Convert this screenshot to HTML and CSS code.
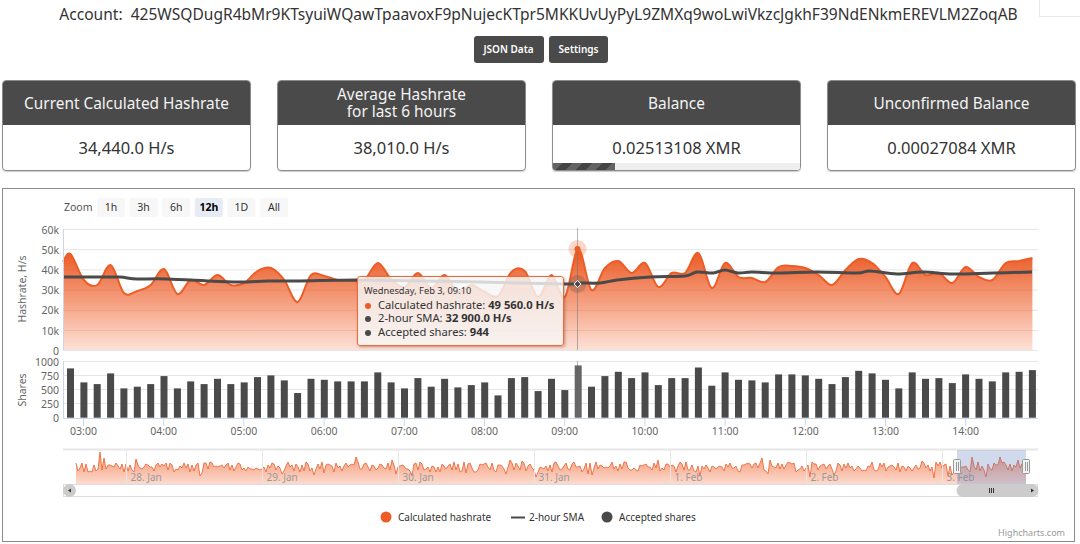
FILE: index.html
```html
<!DOCTYPE html>
<html lang="en">
<head>
    <meta charset="UTF-8">
    <meta name="viewport" content="width=device-width, initial-scale=1.0">
    <title>Miner Stats</title>
    <link rel="stylesheet" href="styles.css">
</head>
<body>
    <div class="corner-tab"></div>

    <p class="account">Account:&nbsp; 425WSQDugR4bMr9KTsyuiWQawTpaavoxF9pNujecKTpr5MKKUvUyPyL9ZMXq9woLwiVkzcJgkhF39NdENkmEREVLM2ZoqAB</p>

    <div class="actions">
        <a class="btn">JSON Data</a>
        <a class="btn">Settings</a>
    </div>

    <div class="cards">
        <div class="card">
            <div class="card-head">Current Calculated Hashrate</div>
            <div class="card-body">34,440.0 H/s</div>
        </div>
        <div class="card">
            <div class="card-head">Average Hashrate<br>for last 6 hours</div>
            <div class="card-body">38,010.0 H/s</div>
        </div>
        <div class="card">
            <div class="card-head">Balance</div>
            <div class="card-body">0.02513108 XMR</div>
            <div class="progress"><div class="progress-bar"></div></div>
        </div>
        <div class="card">
            <div class="card-head">Unconfirmed Balance</div>
            <div class="card-body">0.00027084 XMR</div>
        </div>
    </div>

    <div class="chart-box">
        <!-- chart.js fills this, coordinates in the viewBox are page pixels -->
        <svg id="chart" class="chart" viewBox="3 189 1071 352"></svg>
        <div class="tooltip">
            <div class="tooltip-date">Wednesday, Feb 3, 09:10</div>
            <div><i class="dot dot-orange"></i>Calculated hashrate: <b>49 560.0 H/s</b></div>
            <div><i class="dot"></i>2-hour SMA: <b>32 900.0 H/s</b></div>
            <div><i class="dot"></i>Accepted shares: <b>944</b></div>
        </div>
    </div>

    <script src="chart.js"></script>
</body>
</html>
```

FILE: styles.css
```css
body {
    margin: 0;
    font-family: "Noto Sans", sans-serif;
    color: #333;
    background-color: #fff;
}
.corner-tab {
    position: absolute;
    top: 0;
    right: 0;
    width: 40px;
    height: 16px;
    border-left: 1px solid #e8e8e8;
    border-bottom: 1px solid #e8e8e8;
}
.account {
    margin: 0;
    padding-right: 3px;
    height: 29px;
    line-height: 29px;
    font-size: 15.55px;
    text-align: center;
    white-space: nowrap;
}
.actions {
    display: flex;
    justify-content: center;
    gap: 5px;
    margin-top: 7px;
    padding-left: 2px;
}
.btn {
    display: block;
    height: 27px;
    line-height: 26px;
    padding: 0 10px;
    font-size: 10px;
    font-weight: 600;
    color: #fff;
    background-color: #4a4a4a;
    border-radius: 3px;
}
.cards {
    display: grid;
    grid-template-columns: repeat(4, 249px);
    gap: 26px;
    margin-top: 17px;
    padding-left: 2px;
}
.card {
    position: relative;
    height: 91px;
    box-sizing: border-box;
    border: 1px solid #8c8c8c;
    border-radius: 4px;
    box-shadow: 0 1px 1px rgba(0, 0, 0, 0.2);
    overflow: hidden;
}
.card-head {
    display: flex;
    align-items: center;
    justify-content: center;
    height: 44px;
    font-size: 15.4px;
    line-height: 17px;
    text-align: center;
    color: #f4f4f4;
    background-color: #4a4a4a;
}
.card-body {
    height: 45px;
    line-height: 46px;
    font-size: 16.5px;
    text-align: center;
}
.progress {
    position: absolute;
    left: 0;
    right: 0;
    bottom: 0;
    height: 7px;
    background-color: #eee;
}
.progress-bar {
    width: 62px;
    height: 100%;
    background-color: #444;
    background-image: linear-gradient(135deg, #636363 25%, transparent 25%, transparent 50%, #636363 50%, #636363 75%, transparent 75%);
    background-size: 20px 20px;
}
.chart-box {
    position: relative;
    width: 1071px;
    height: 352px;
    margin: 17px 0 0 2px;
    border: 1px solid #8c8c8c;
    overflow: hidden;
}
.chart {
    display: block;
    width: 1071px;
    height: 352px;
}
.chart text {
    font-family: "Noto Sans", sans-serif;
    font-size: 10.5px;
    fill: #666;
}
.chart .zoom-label { fill: #555; }
.chart .zoom-btn { fill: #f7f7f7; }
.chart .zoom-btn-on { fill: #e6ebf5; }
.chart .zoom-text { text-anchor: middle; fill: #333; }
.chart .zoom-text-on { font-weight: 700; fill: #000; }
.chart .y-label { text-anchor: end; }
.chart .x-label { text-anchor: middle; }
.chart .axis-title { text-anchor: middle; }
.chart .nav-label { fill: #999; font-size: 10px; }
.chart .legend-text { fill: #333; font-size: 10px; }
.chart .credits { fill: #999; font-size: 9px; text-anchor: end; }
.grid { stroke: #e6e6e6; stroke-width: 1; }
.axis { stroke: #ccd6eb; stroke-width: 1; fill: none; }
.area { fill: url(#areaFill); stroke: none; }
.hash-line { fill: none; stroke: #ee5c26; stroke-width: 2; }
.sma-line { fill: none; stroke: #4a4a4a; stroke-width: 3; }
.bar { fill: #4a4a4a; }
.bar-hover { fill: #666; }
.crosshair { stroke: rgba(110, 110, 110, 0.5); stroke-width: 1; }
.nav-fill { fill: url(#navFill); stroke: none; }
.nav-line { fill: none; stroke: #ee6a3a; stroke-width: 0.9; }
.nav-top { stroke: #e6e6e6; stroke-width: 2; }
.nav-mask { fill: rgba(102, 133, 194, 0.3); }
.handle { fill: #f2f2f2; stroke: #999; stroke-width: 1; }
.handle-grip { stroke: #999; stroke-width: 1; }
.track { fill: #fff; stroke: #ddd; stroke-width: 1; }
.thumb { fill: #ccc; }
.arrow { fill: #333; }
.grip { stroke: #333; stroke-width: 1; }
.tooltip {
    position: absolute;
    left: 354px;
    top: 87px;
    width: 199px;
    height: 61px;
    padding: 7px 0 0 6px;
    font-size: 11.2px;
    line-height: 13.3px;
    white-space: nowrap;
    color: #333;
    background-color: rgba(247, 247, 247, 0.82);
    border: 1px solid #ee6a3a;
    border-radius: 3px;
    box-shadow: 1px 1px 3px rgba(120, 50, 20, 0.45);
}
.tooltip-date {
    font-size: 9.3px;
    line-height: 14px;
}
.dot {
    display: inline-block;
    width: 6px;
    height: 6px;
    margin: 0 7px 0 1px;
    border-radius: 50%;
    background-color: #4a4a4a;
}
.dot-orange { background-color: #ee5c26; }
```

FILE: chart.js
```js
// --- Data (10 minute samples) ---
const X0 = 70.5;
const STEP = 13.36;

const hashY = [254,280,285,265,293,291,285,269,294,280,285,275,285,283,271,268,280,302,275,276,280,281,
    280,263,279,287,273,288,275,292,285,292,296,272,271,297,275,297,249,290,268,261,273,263,287,273,273,253,288,
    263,277,278,282,267,266,268,275,285,270,259,263,277,294,263,275,273,283,267,277,280,263,261,258];

const smaPts = [[63,277],[100,277],[120,277],[137,279],[167,279],[233,282],[267,281],[300,281],[357,280],
    [420,281],[480,282],[567,284],[578,283],[600,283],[617,280],[650,277],[685,276],[697,272],[713,273],[725,270],
    [738,273],[752,272],[778,273],[817,272],[857,273],[870,271],[897,274],[923,272],[953,274],[993,273],[1032,272]];

const shares = [889,637,607,799,529,559,607,751,529,655,607,703,607,637,733,763,673,445,703,685,655,655,
    655,817,637,529,715,559,703,547,589,637,403,715,733,481,703,499,944,559,751,829,715,817,589,715,715,907,577,
    817,685,673,637,781,781,763,703,607,733,847,799,685,529,817,703,715,625,781,703,655,817,829,859];

const hashPts = [[63,262]].concat(hashY.map((y, i) => [X0 + STEP * i, y]));

// --- Helpers ---
const svg = document.getElementById('chart');
let markup = `<defs>
    <linearGradient id="areaFill" x1="0" y1="0" x2="0" y2="1">
        <stop offset="0" stop-color="#e9561f"/><stop offset="1" stop-color="#f15a22" stop-opacity="0.18"/>
    </linearGradient>
    <linearGradient id="navFill" x1="0" y1="0" x2="0" y2="1">
        <stop offset="0" stop-color="#ee6a3a" stop-opacity="0.7"/><stop offset="1" stop-color="#f15a22" stop-opacity="0.22"/>
    </linearGradient>
</defs>`;

function add(s) { markup += s; }
function line(x1, y1, x2, y2, cls) { add(`<line x1="${x1}" y1="${y1}" x2="${x2}" y2="${y2}" class="${cls}"/>`); }
function text(x, y, str, cls) { add(`<text x="${x}" y="${y}" class="${cls}">${str}</text>`); }

// smooth line through points
function spline(pts) {
    let d = `M${pts[0][0]} ${pts[0][1]}`;
    for (let i = 0; i < pts.length - 1; i++) {
        const p0 = pts[Math.max(i - 1, 0)], p1 = pts[i], p2 = pts[i + 1], p3 = pts[Math.min(i + 2, pts.length - 1)];
        const c1x = p1[0] + (p2[0] - p0[0]) / 6, c1y = p1[1] + (p2[1] - p0[1]) / 6;
        const c2x = p2[0] - (p3[0] - p1[0]) / 6, c2y = p2[1] - (p3[1] - p1[1]) / 6;
        d += `C${c1x.toFixed(1)} ${c1y.toFixed(1)} ${c2x.toFixed(1)} ${c2y.toFixed(1)} ${p2[0].toFixed(1)} ${p2[1]}`;
    }
    return d;
}

// --- Range selector ---
text(64, 211, 'Zoom', 'zoom-label');
['1h', '3h', '6h', '12h', '1D', 'All'].forEach((label, i) => {
    const x = 97 + i * 32.6;
    const on = label === '12h';
    add(`<rect x="${x}" y="198" width="28" height="19" rx="2" class="${on ? 'zoom-btn-on' : 'zoom-btn'}"/>`);
    text(x + 14, 211, label, on ? 'zoom-text zoom-text-on' : 'zoom-text');
});

// --- Hashrate pane ---
['60k', '50k', '40k', '30k', '20k', '10k', '0'].forEach((label, i) => {
    const y = 229.5 + i * 20.2;
    if (i < 6) line(63, y, 1038, y, 'grid');
    text(59, y + 4, label, 'y-label');
});
const lastX = hashPts[hashPts.length - 1][0];
add(`<path d="${spline(hashPts)}L${lastX} 350L63 350Z" class="area"/>`);
add(`<path d="${spline(hashPts)}" class="hash-line"/>`);
add(`<path d="${spline(smaPts)}" class="sma-line"/>`);
line(63.5, 229, 63.5, 350, 'axis');
line(63, 350.5, 1038, 350.5, 'grid');
add(`<text transform="translate(26 289) rotate(-90)" class="axis-title">Hashrate, H/s</text>`);

// --- Shares pane ---
['1000', '750', '500', '250', '0'].forEach((label, i) => {
    const y = 361.5 + i * 14;
    if (i < 4) line(63, y, 1038, y, 'grid');
    text(59, y + 4, label, 'y-label');
});
line(577.5, 361, 577.5, 418, 'crosshair');
shares.forEach((v, i) => {
    const h = v / 1000 * 55.4;
    const x = X0 + STEP * i - 3.5;
    add(`<rect x="${x.toFixed(1)}" y="${(417.7 - h).toFixed(1)}" width="7" height="${h.toFixed(1)}" class="${v === 944 ? 'bar-hover' : 'bar'}"/>`);
});
line(63.5, 361, 63.5, 418, 'axis');
line(63, 418.5, 1038, 418.5, 'axis');
add(`<text transform="translate(26 390) rotate(-90)" class="axis-title">Shares</text>`);

// time axis
for (let i = 0; i < 12; i++) {
    const x = 83.5 + i * 80.2;
    line(x, 418, x, 426, 'axis');
    text(x, 435, String(3 + i).padStart(2, '0') + ':00', 'x-label');
}

// --- Hover markers ---
line(577.5, 228, 577.5, 350, 'crosshair');
add('<circle cx="577.5" cy="249" r="9" fill="#ee5c26" opacity="0.25"/><circle cx="577.5" cy="249" r="3" fill="#ee5c26"/>');
add('<circle cx="577.5" cy="284" r="9" fill="#4a4a4a" opacity="0.25"/>');
add('<path d="M577.5 280.5L581 284L577.5 287.5L574 284Z" fill="#4a4a4a" stroke="#fff"/>');

// --- Navigator ---
function noise(i) {
    const s = Math.sin(i * 127.1 + 11.7) * 43758.5453;
    return s - Math.floor(s);
}
const navPts = [];
for (let i = 0, x = 76; x <= 1026; x += 2, i++) {
    let y = 467 + (noise(i) - 0.5) * 10;
    if (noise(i + 1000) > 0.92) y -= 7 * noise(i + 2000);
    if (noise(i + 3000) > 0.92) y += 8 * noise(i + 4000);
    navPts.push([x, Math.round(y)]);
}
navPts[12][1] = 452;
navPts[14][1] = 458;
navPts[62][1] = 476;
const navLine = navPts.map((p, i) => (i ? 'L' : 'M') + p[0] + ' ' + p[1]).join('');
line(63, 449.5, 1038, 449.5, 'nav-top');
add(`<path d="${navLine}L1026 484L76 484Z" class="nav-fill"/>`);
add(`<path d="${navLine}" class="nav-line"/>`);
['28. Jan', '29. Jan', '30. Jan', '31. Jan', '1. Feb', '2. Feb', '3. Feb'].forEach((label, i) => {
    const x = 126.5 + i * 136;
    line(x, 450, x, 484, 'grid');
    text(x + 4, 481, label, 'nav-label');
});
add('<rect x="957" y="450" width="69" height="34" class="nav-mask"/>');

// scrollbar
add('<rect x="63.5" y="484.5" width="974" height="12" class="track"/>');
add('<circle cx="69.5" cy="490.5" r="6.5" class="thumb"/><path d="M71 488.5V492.5L68 490.5Z" class="arrow"/>');
add('<path d="M963 484H1032a6.5 6.5 0 0 1 0 13H963a6.5 6.5 0 0 1 0 -13Z" class="thumb"/><path d="M1031 488.5V492.5L1034 490.5Z" class="arrow"/>');
[989, 991, 993].forEach(x => line(x + 0.5, 488, x + 0.5, 493, 'grip'));

// handles
[957, 1026].forEach(x => {
    add(`<rect x="${x - 3.5}" y="459.5" width="7" height="14" rx="1" class="handle"/>`);
    line(x - 0.5, 462, x - 0.5, 471, 'handle-grip');
    line(x + 1.5, 462, x + 1.5, 471, 'handle-grip');
});

// --- Legend ---
add('<circle cx="386" cy="517" r="5.5" fill="#ee5c26"/>');
text(398, 521, 'Calculated hashrate', 'legend-text');
add('<rect x="511" y="516.5" width="14" height="2" fill="#4a4a4a"/>');
text(529, 521, '2-hour SMA', 'legend-text');
add('<circle cx="607" cy="517" r="5.5" fill="#4a4a4a"/>');
text(619, 521, 'Accepted shares', 'legend-text');
text(1065, 536, 'Highcharts.com', 'credits');

svg.innerHTML = markup;
```
